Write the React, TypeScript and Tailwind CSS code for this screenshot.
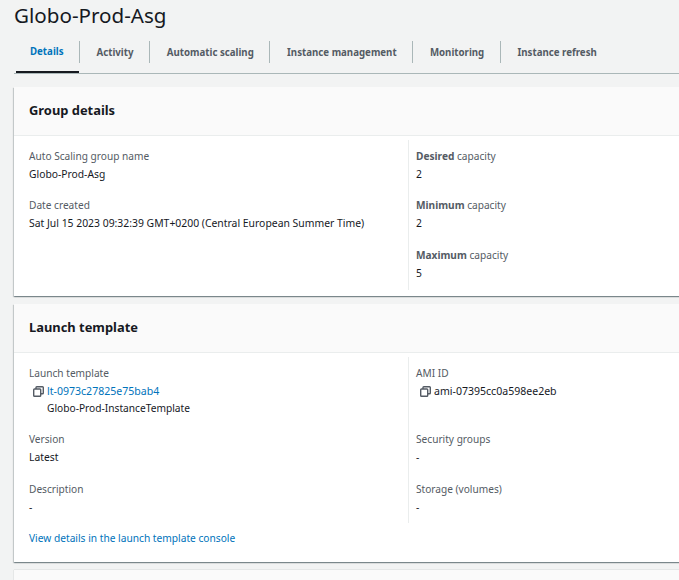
import React from 'react';

const tabs = ['Details', 'Activity', 'Automatic scaling', 'Instance management', 'Monitoring', 'Instance refresh'];

function CopyIcon() {
  return (
    <svg width="11" height="11" viewBox="0 0 11 11" fill="none" stroke="#545b64" strokeWidth="1.4" className="shrink-0">
      <rect x="0.7" y="3" width="7" height="7.3" rx="0.8" />
      <path d="M3 3V1.5q0-.8.8-.8h5.7q.8 0 .8.8V7q0 .8-.8.8H8" />
    </svg>
  );
}

function Field({ label, className, children }: { label: React.ReactNode; className?: string; children: React.ReactNode }) {
  return (
    <div className={className}>
      <div className="h-[18px] leading-[18px] text-[10.15px] text-[#545b64]">{label}</div>
      <div className="h-[18px] leading-[18px] text-[#16191f]">{children}</div>
    </div>
  );
}

function CardHeader({ title, className }: { title: string; className?: string }) {
  return (
    <div className={`h-[49px] flex items-center pl-[15px] bg-[#fafafa] border-b border-[#eaeded] text-[12.9px] font-bold text-[#16191f] ${className ?? ''}`}>
      {title}
    </div>
  );
}

export default function App() {
  return (
    <div className="w-[679px] h-[580px] overflow-hidden bg-[#f2f3f3] pl-[14px] font-['Noto_Sans',sans-serif] text-[10.3px]">
      <h1 className="h-[30px] leading-[30px] text-[20.6px] text-[#16191f]">Globo-Prod-Asg</h1>

      <div className="mt-[10px] h-[34px] flex border-b border-[#aab7b8] pl-[2px] text-[9.7px] font-bold text-[#545b64]">
        {tabs.map((t, i) => (
          <div key={t} className="h-[33px] flex items-start">
            <div className={i === 0 ? 'h-[33px] pl-[14px] pr-[15px] pb-[6px] flex items-center text-[#0073bb] border-b-2 border-[#16191f]' : 'h-[33px] pl-[17px] pr-[15.3px] pb-[6px] flex items-center'}>
              {t}
            </div>
            {i < tabs.length - 1 && <div className="w-px h-[22px] mt-px bg-[#aab7b8]" />}
          </div>
        ))}
      </div>

      <div className="mt-[13px] w-[700px] bg-white shadow-[0_1px_1px_0_rgba(0,28,36,0.3),1px_1px_1px_0_rgba(0,28,36,0.15),-1px_1px_1px_0_rgba(0,28,36,0.15)]">
        <CardHeader title="Group details" className="pb-[1px]" />
        <div className="flex pt-[4px] pb-[6px]">
          <div className="w-[394px] pl-[15px] pt-[7px] h-[150px]">
            <Field label="Auto Scaling group name">Globo-Prod-Asg</Field>
            <Field label="Date created" className="mt-[13px]">
              <span className="text-[10.4px]">Sat Jul 15 2023 09:32:39 GMT+0200 (Central European Summer Time)</span>
            </Field>
          </div>
          <div className="flex-1 border-l border-[#eaeded] pl-[7px] pt-[7px]">
            <Field label={<><b>Desired</b> capacity</>}>2</Field>
            <Field label={<><b>Minimum</b> capacity</>} className="mt-[13px]">2</Field>
            <Field label={<><b>Maximum</b> capacity</>} className="mt-[14px]">5</Field>
          </div>
        </div>
      </div>

      <div className="mt-[8px] w-[700px] h-[258px] bg-white shadow-[0_1px_1px_0_rgba(0,28,36,0.3),1px_1px_1px_0_rgba(0,28,36,0.15),-1px_1px_1px_0_rgba(0,28,36,0.15)]">
        <CardHeader title="Launch template" />
        <div className="flex pt-[4px]">
          <div className="w-[394px] pl-[15px] pt-[7px] h-[166px]">
            <Field label="Launch template">
              <span className="flex items-center gap-[3px] pl-[4px]">
                <CopyIcon />
                <span className="text-[10.55px] text-[#0073bb]">lt-0973c27825e75bab4</span>
              </span>
            </Field>
            <div className="h-[16px] leading-[16px] pl-[18px] text-[10.2px] text-[#16191f]">Globo-Prod-InstanceTemplate</div>
            <Field label="Version" className="mt-[14px]">Latest</Field>
            <Field label="Description" className="mt-[14px]">-</Field>
          </div>
          <div className="flex-1 border-l border-[#eaeded] pl-[7px] pt-[7px]">
            <Field label="AMI ID">
              <span className="flex items-center gap-[3px] pl-[4px]">
                <CopyIcon />
                <span className="text-[10.55px]">ami-07395cc0a598ee2eb</span>
              </span>
            </Field>
            <Field label="Security groups" className="mt-[30px]">-</Field>
            <Field label="Storage (volumes)" className="mt-[14px]">-</Field>
          </div>
        </div>
        <div className="pl-[15px] pt-[6px] leading-[18px] text-[10.2px] text-[#0073bb]">View details in the launch template console</div>
      </div>

      <div className="mt-[8px] w-[700px] h-[40px] bg-[#fafafa] shadow-[0_0_1px_0_rgba(0,28,36,0.3)]" />
    </div>
  );
}
